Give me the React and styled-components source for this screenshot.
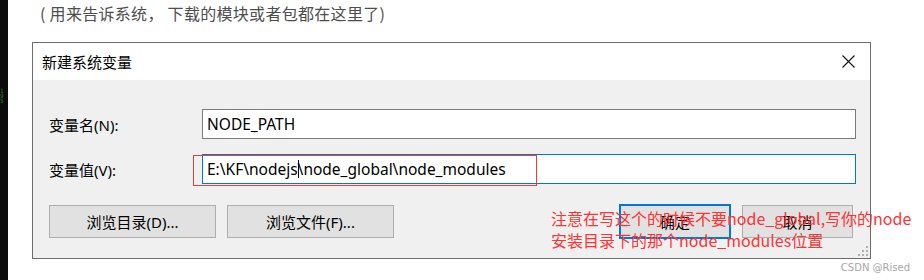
import styled, { createGlobalStyle } from "styled-components";

const Global = createGlobalStyle`
  html, body {
    margin: 0;
    background: #fff;
  }
  body {
    font-family: "Noto Sans", "Noto Sans CJK SC", sans-serif;
  }
`;

const Page = styled.div`
  display: flex;
  width: 924px;
  height: 280px;
  overflow: hidden;
`;

const Strip = styled.div`
  width: 8px;
  flex: none;
  background: #0c0c0c;
  color: #2f7a2f;
  font: 6px/5px "DejaVu Sans Mono", monospace;
  padding-top: 88px;
  box-sizing: border-box;
  overflow: hidden;
  white-space: pre;
`;

const Main = styled.div`
  flex: 1;
  padding-left: 24px;
  position: relative;
`;

const Caption = styled.div`
  margin: 3px 0 0 8px;
  height: 39px;
  font-size: 16px;
  letter-spacing: 0.3px;
  line-height: 20px;
  color: #4d4d4d;
  font-family: "Noto Sans CJK SC", sans-serif;
`;

const Dialog = styled.div`
  position: relative;
  width: 837px;
  border: 1px solid #6d6d6d;
  background: #f0f0f0;
`;

const TitleBar = styled.div`
  height: 37px;
  background: #fff;
  display: flex;
  align-items: center;
  justify-content: space-between;
  padding: 0 15px 0 9px;
  font-family: "Noto Sans CJK SC", sans-serif;
  font-size: 15px;
  color: #000;
`;

const Body = styled.div`
  padding: 29px 14px 19px 16px;
`;

const Grid = styled.div`
  display: grid;
  grid-template-columns: 153px 1fr;
  row-gap: 15px;
  align-items: center;
`;

const Label = styled.label`
  font-size: 15px;
  color: #000;
  font-family: "Noto Sans", "Noto Sans CJK SC", sans-serif;
`;

const Field = styled.div`
  height: 28px;
  border: 1px solid ${(p) => (p.$focus ? "#0078d7" : "#7a7a7a")};
  background: #fff;
  display: flex;
  align-items: center;
  padding-left: 4px;
  font-size: 15.5px;
  color: #000;
  white-space: pre;
`;

const Caret = styled.span`
  display: inline-block;
  width: 1px;
  height: 18px;
  background: #000;
  margin: 0 -1px 0 0;
  vertical-align: middle;
`;

const Buttons = styled.div`
  display: flex;
  margin-top: 21px;
  gap: 11px;
`;

const Button = styled.div`
  width: ${(p) => p.$w}px;
  height: 31px;
  box-sizing: content-box;
  border: ${(p) => (p.$default ? "2px solid #0078d7" : "1px solid #adadad")};
  background: #e1e1e1;
  display: flex;
  align-items: center;
  justify-content: center;
  font-size: 15px;
  color: #000;
  margin-left: ${(p) => p.$push || 0}px;
  margin-top: ${(p) => (p.$default ? -1 : 0)}px;
`;

const Grip = styled.svg`
  position: absolute;
  right: 2px;
  bottom: 2px;
`;

const Highlight = styled.div`
  position: absolute;
  left: 160px;
  top: 112px;
  width: 342px;
  height: 29px;
  border: 1px solid #f03a3a;
`;

const Note = styled.div`
  position: absolute;
  left: 518px;
  top: 164px;
  width: 380px;
  font-family: "Noto Sans CJK SC", sans-serif;
  font-size: 16px;
  line-height: 22px;
  color: #ff3333;
  white-space: pre;
`;

const Watermark = styled.div`
  position: absolute;
  right: 14px;
  bottom: 7px;
  font-family: "DejaVu Sans", sans-serif;
  font-size: 10px;
  color: #a6a6a6;
`;

function Close() {
  return (
    <svg width="13" height="13" viewBox="0 0 13 13">
      <path d="M0.5 0.5 L12.5 12.5 M12.5 0.5 L0.5 12.5" stroke="#111" strokeWidth="1.1" />
    </svg>
  );
}

export default function App() {
  return (
    <>
      <Global />
      <Page>
        <Strip>{"1\n9\n5"}</Strip>
        <Main>
          <Caption>( 用来告诉系统， 下载的模块或者包都在这里了)</Caption>
          <Dialog>
            <TitleBar>
              <span>新建系统变量</span>
              <Close />
            </TitleBar>
            <Body>
              <Grid>
                <Label>变量名(N):</Label>
                <Field>NODE_PATH</Field>
                <Label>变量值(V):</Label>
                <Field $focus>
                  E:\KF\nodejs<Caret />\node_global\node_modules
                </Field>
              </Grid>
              <Buttons>
                <Button $w={165}>浏览目录(D)...</Button>
                <Button $w={165}>浏览文件(F)...</Button>
                <Button $w={108} $default $push={214}>确定</Button>
                <Button $w={109}>取消</Button>
              </Buttons>
            </Body>
            <Grip width="10" height="10" viewBox="0 0 10 10">
              {[
                [8, 0],
                [8, 4],
                [4, 4],
                [8, 8],
                [4, 8],
                [0, 8],
              ].map(([x, y]) => (
                <rect key={`${x}-${y}`} x={x} y={y} width="2" height="2" fill="#b0b0b0" />
              ))}
            </Grip>
            <Highlight />
            <Note>
              {"注意在写这个的时候不要node_global,写你的node\n安装目录下的那个node_modules位置"}
            </Note>
          </Dialog>
          <Watermark>CSDN @Rised</Watermark>
        </Main>
      </Page>
    </>
  );
}
